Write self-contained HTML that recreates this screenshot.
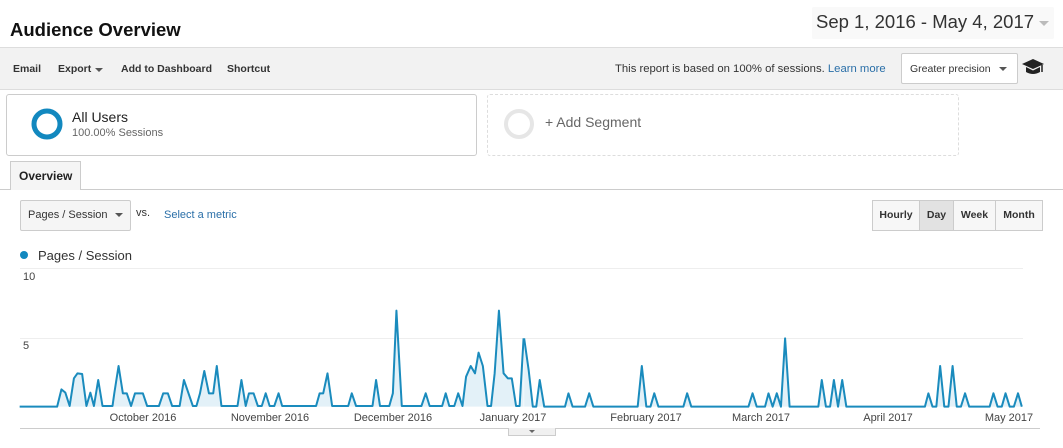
<!DOCTYPE html>
<html><head><meta charset="utf-8"><style>
*{margin:0;padding:0;box-sizing:border-box}
body{width:1063px;height:448px;background:#fff;font-family:"Liberation Sans",Arial,sans-serif;color:#222;position:relative;overflow:hidden}
.a{position:absolute;white-space:nowrap}
.tb{font-size:10.5px;font-weight:bold;color:#333;top:63px}
.btn{position:absolute;top:200px;height:31px;border:1px solid #ccc;background:#f7f7f7;font-size:10.5px;font-weight:bold;color:#333;text-align:center;line-height:29px}
.xl{font-size:11px;color:#444;top:412px;transform:translateX(-50%)}
</style></head><body>
<div class="a" style="left:10px;top:19px;font-size:18.5px;font-weight:bold;color:#111">Audience Overview</div>
<div class="a" style="left:812px;top:7px;width:242px;height:32px;background:#f9f9f9;border-radius:2px"></div>
<div class="a" style="left:816px;top:11px;font-size:18.5px;color:#333">Sep 1, 2016 - May 4, 2017</div>
<div class="a" style="left:1039px;top:21px;width:0;height:0;border-left:5px solid transparent;border-right:5px solid transparent;border-top:5px solid #bbb"></div>

<div class="a" style="left:0;top:47px;width:1063px;height:43px;background:#f2f2f2;border-top:1px solid #ddd;border-bottom:1px solid #ddd"></div>
<div class="a tb" style="left:13px">Email</div>
<div class="a tb" style="left:58px">Export</div>
<div class="a" style="left:95px;top:68px;border-left:4px solid transparent;border-right:4px solid transparent;border-top:4px solid #555"></div>
<div class="a tb" style="left:121px">Add to Dashboard</div>
<div class="a tb" style="left:227px">Shortcut</div>
<div class="a" style="left:615px;top:63px;font-size:11.3px;color:#333">This report is based on 100% of sessions. <span style="color:#2a6fa8">Learn more</span></div>
<div class="a" style="left:901px;top:53px;width:117px;height:31px;background:#fff;border:1px solid #ccc;border-radius:2px"></div>
<div class="a" style="left:910px;top:63px;font-size:10.5px;color:#333">Greater precision</div>
<div class="a" style="left:999px;top:67px;border-left:4px solid transparent;border-right:4px solid transparent;border-top:4px solid #555"></div>
<svg class="a" style="left:1021px;top:58px" width="24" height="20" viewBox="0 0 24 20"><path d="M1 6 L12 1 L23 6 L12 11 Z" fill="#222"/><path d="M5 9 L5 14 Q12 18 19 14 L19 9 L12 12.5 Z" fill="#222"/><path d="M21 7 L21 14" stroke="#222" stroke-width="1.5"/></svg>

<div class="a" style="left:6px;top:94px;width:471px;height:62px;border:1px solid #ccc;border-radius:3px"></div>
<svg class="a" style="left:30px;top:107px" width="34" height="34"><circle cx="17" cy="17" r="13" fill="none" stroke="#1288bf" stroke-width="5"/></svg>
<div class="a" style="left:72px;top:109px;font-size:14px;color:#222">All Users</div>
<div class="a" style="left:72px;top:127px;font-size:11px;color:#666">100.00% Sessions</div>
<div class="a" style="left:487px;top:94px;width:472px;height:62px;border:1px dashed #ddd;border-radius:3px"></div>
<svg class="a" style="left:502px;top:107px" width="34" height="34"><circle cx="17" cy="17" r="13" fill="none" stroke="#e6e6e6" stroke-width="4"/></svg>
<div class="a" style="left:545px;top:114px;font-size:14px;color:#666">+ Add Segment</div>

<div class="a" style="left:0;top:189px;width:1063px;height:1px;background:#ccc"></div>
<div class="a" style="left:10px;top:161px;width:71px;height:29px;background:#f5f5f5;border:1px solid #ccc;border-bottom:none"></div>
<div class="a" style="left:19px;top:169px;font-size:12px;font-weight:bold;color:#222">Overview</div>

<div class="a" style="left:20px;top:200px;width:111px;height:31px;background:#f5f5f5;border:1px solid #ccc;border-radius:2px"></div>
<div class="a" style="left:28px;top:209px;font-size:11px;color:#333">Pages / Session</div>
<div class="a" style="left:115px;top:213px;border-left:4px solid transparent;border-right:4px solid transparent;border-top:4px solid #555"></div>
<div class="a" style="left:136px;top:207px;font-size:11px;color:#333">vs.</div>
<div class="a" style="left:164px;top:209px;font-size:11px;color:#2a6fa8">Select a metric</div>

<div class="btn" style="left:872px;width:48px">Hourly</div>
<div class="btn" style="left:919px;width:35px;background:#e2e2e2">Day</div>
<div class="btn" style="left:953px;width:43px">Week</div>
<div class="btn" style="left:995px;width:48px">Month</div>

<div class="a" style="left:20px;top:251px;width:8px;height:8px;border-radius:50%;background:#1288bf"></div>
<div class="a" style="left:38px;top:248px;font-size:13px;color:#333">Pages / Session</div>
<div class="a" style="left:20px;top:268px;width:1003px;height:1px;background:#eee"></div>
<div class="a" style="left:20px;top:338px;width:1003px;height:1px;background:#eee"></div>
<div class="a" style="left:23px;top:271px;font-size:11px;color:#444">10</div>
<div class="a" style="left:23px;top:340px;font-size:11px;color:#444">5</div>

<svg class="a" style="left:0;top:260px" width="560" height="188" viewBox="0 0 1568 564" preserveAspectRatio="none">
<path d="M55,440 L160,440 L172,388 L183,398 L195,438 L207,355 L217,340 L230,342 L242,438 L253,398 L263,438 L275,360 L287,438 L315,438 L320,400 L332,318 L344,400 L355,400 L367,438 L378,400 L400,400 L412,438 L445,438 L457,400 L470,400 L482,438 L503,438 L515,360 L540,438 L550,438 L560,400 L572,333 L585,400 L597,400 L607,318 L620,438 L665,438 L676,360 L688,438 L697,400 L710,400 L722,438 L733,438 L744,400 L755,438 L768,438 L780,400 L790,438 L885,438 L895,400 L905,400 L917,340 L930,438 L975,438 L985,400 L997,438 L1043,438 L1053,360 L1064,438 L1090,438 L1100,400 L1110,152 L1125,438 L1180,438 L1192,400 L1203,438 L1238,438 L1248,400 L1258,438 L1272,438 L1283,400 L1295,438 L1305,350 L1318,318 L1330,340 L1340,278 L1352,318 L1365,438 L1375,438 L1385,340 L1397,152 L1410,340 L1422,355 L1433,355 L1445,438 L1455,438 L1466,235 L1466,440 Z" fill="#e3f1f8"/>
<path d="M55,440 L160,440 L172,388 L183,398 L195,438 L207,355 L217,340 L230,342 L242,438 L253,398 L263,438 L275,360 L287,438 L315,438 L320,400 L332,318 L344,400 L355,400 L367,438 L378,400 L400,400 L412,438 L445,438 L457,400 L470,400 L482,438 L503,438 L515,360 L540,438 L550,438 L560,400 L572,333 L585,400 L597,400 L607,318 L620,438 L665,438 L676,360 L688,438 L697,400 L710,400 L722,438 L733,438 L744,400 L755,438 L768,438 L780,400 L790,438 L885,438 L895,400 L905,400 L917,340 L930,438 L975,438 L985,400 L997,438 L1043,438 L1053,360 L1064,438 L1090,438 L1100,400 L1110,152 L1125,438 L1180,438 L1192,400 L1203,438 L1238,438 L1248,400 L1258,438 L1272,438 L1283,400 L1295,438 L1305,350 L1318,318 L1330,340 L1340,278 L1352,318 L1365,438 L1375,438 L1385,340 L1397,152 L1410,340 L1422,355 L1433,355 L1445,438 L1455,438 L1466,235" fill="none" stroke="#1a8bbd" stroke-width="2" vector-effect="non-scaling-stroke" stroke-linejoin="round"/>
</svg>
<svg class="a" style="left:520px;top:260px" width="543" height="188" viewBox="0 0 1569 564" preserveAspectRatio="none">
<path d="M12,440 L12,235 L25,330 L37,440 L47,440 L57,360 L70,440 L130,440 L140,400 L152,440 L188,440 L200,400 L212,440 L340,440 L352,318 L365,440 L377,440 L388,400 L400,440 L472,440 L483,400 L495,440 L660,440 L672,400 L684,440 L708,440 L718,400 L730,440 L742,400 L754,440 L766,235 L779,440 L862,440 L872,360 L884,440 L896,440 L907,360 L919,440 L931,360 L943,440 L1170,440 L1180,400 L1192,440 L1203,440 L1214,318 L1226,440 L1238,440 L1250,318 L1262,440 L1274,440 L1286,400 L1298,440 L1357,440 L1368,400 L1380,440 L1392,440 L1403,400 L1415,440 L1427,440 L1439,400 L1450,440 Z" fill="#e3f1f8"/>
<path d="M12,235 L25,330 L37,440 L47,440 L57,360 L70,440 L130,440 L140,400 L152,440 L188,440 L200,400 L212,440 L340,440 L352,318 L365,440 L377,440 L388,400 L400,440 L472,440 L483,400 L495,440 L660,440 L672,400 L684,440 L708,440 L718,400 L730,440 L742,400 L754,440 L766,235 L779,440 L862,440 L872,360 L884,440 L896,440 L907,360 L919,440 L931,360 L943,440 L1170,440 L1180,400 L1192,440 L1203,440 L1214,318 L1226,440 L1238,440 L1250,318 L1262,440 L1274,440 L1286,400 L1298,440 L1357,440 L1368,400 L1380,440 L1392,440 L1403,400 L1415,440 L1427,440 L1439,400 L1450,440" fill="none" stroke="#1a8bbd" stroke-width="2" vector-effect="non-scaling-stroke" stroke-linejoin="round"/>
</svg>

<div class="a xl" style="left:143px">October 2016</div>
<div class="a xl" style="left:270px">November 2016</div>
<div class="a xl" style="left:393px">December 2016</div>
<div class="a xl" style="left:513px">January 2017</div>
<div class="a xl" style="left:646px">February 2017</div>
<div class="a xl" style="left:761px">March 2017</div>
<div class="a xl" style="left:888px">April 2017</div>
<div class="a xl" style="left:1009px">May 2017</div>

<div class="a" style="left:20px;top:428px;width:1020px;height:1px;background:#ccc"></div>
<div class="a" style="left:508px;top:428px;width:48px;height:8px;background:#f0f0f0;border:1px solid #ccc;border-top:none"></div>
<div class="a" style="left:529px;top:430px;border-left:3px solid transparent;border-right:3px solid transparent;border-top:3px solid #666"></div>
</body></html>
